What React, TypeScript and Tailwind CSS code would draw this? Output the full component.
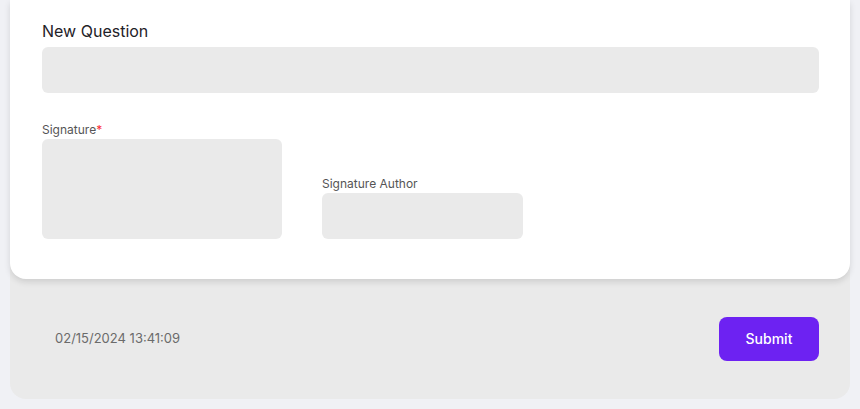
import React from 'react';

const Field = ({ label, required, className }: { label: string; required?: boolean; className: string }) => (
    <div className="flex flex-col">
        <label className="text-xs leading-4 text-[#555]">
            {label}
            {required && <span className="text-red-500">*</span>}
        </label>
        <div className={`mt-[1px] rounded-md bg-[#eaeaea] ${className}`} />
    </div>
);

export default function App() {
    return (
        <div className="min-h-[409px] bg-[#f0f1f5] px-[10px] pb-[11px] font-['Inter',sans-serif]">
            <div className="rounded-b-2xl bg-[#eaeaea]">
                {/* Question card */}
                <div className="rounded-b-2xl bg-white pl-8 pr-[31px] pt-[19px] pb-[40px] shadow-[0_3px_6px_rgba(0,0,0,0.12)]">
                    <h2 className="text-base leading-6 text-[#1f2228]">New Question</h2>
                    <div className="mt-1 h-[46px] rounded-md bg-[#eaeaea]" />

                    <div className="mt-[29px] flex items-end gap-10">
                        <Field label="Signature" required className="h-[100px] w-[240px]" />
                        <Field label="Signature Author" className="h-[46px] w-[201px]" />
                    </div>
                </div>

                {/* Footer */}
                <div className="flex h-[120px] items-center justify-between pl-[45px] pr-[31px]">
                    <span className="text-[13px] text-[#6b6b6b]">02/15/2024 13:41:09</span>
                    <button className="h-[44px] w-[100px] rounded-lg bg-[#6d22f2] text-sm font-medium text-white">
                        Submit
                    </button>
                </div>
            </div>
        </div>
    );
}
